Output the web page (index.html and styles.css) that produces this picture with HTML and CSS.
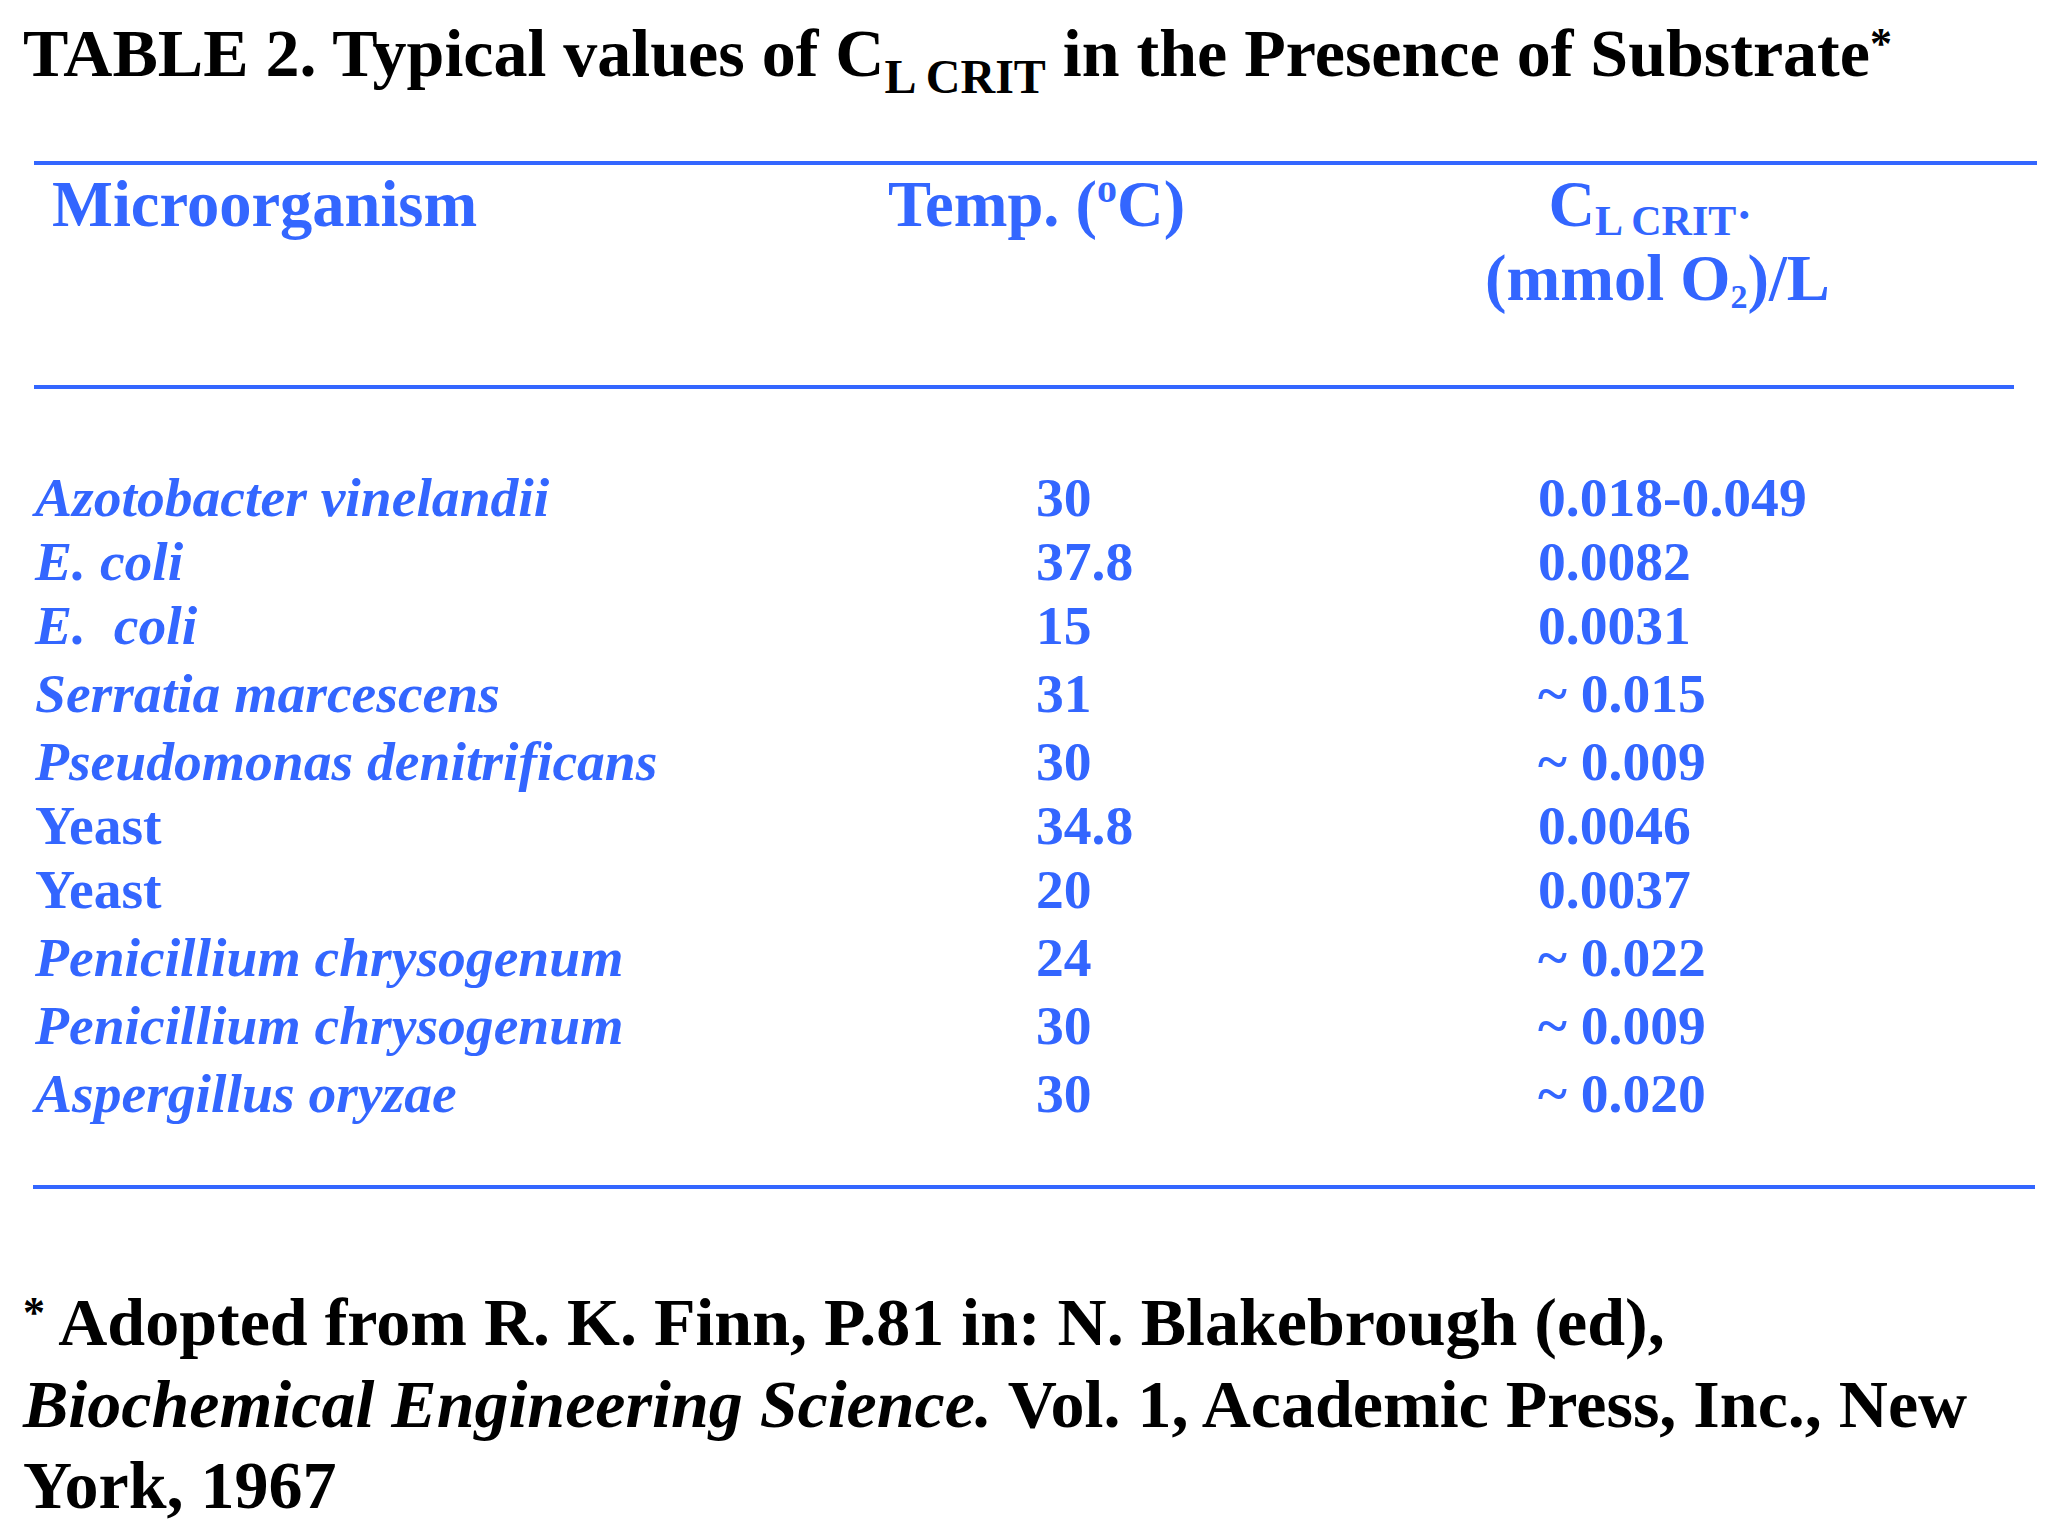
FILE: index.html
```html
<!DOCTYPE html>
<html lang="en">
<head>
<meta charset="utf-8">
<title>Typical values of CL CRIT</title>
<link rel="stylesheet" href="styles.css">
</head>
<body>
<div class="slide">
  <h1 class="title">TABLE 2. Typical values of C<span class="tsub">L CRIT</span> in the Presence of Substrate<span class="star">*</span></h1>

  <div class="table">
    <div class="rule rule-top"></div>
    <div class="head">
      <div class="hcell hcell-org">Microorganism</div>
      <div class="hcell">Temp. (<span class="deg">o</span>C)</div>
      <div class="hcell hcell-c">
        <div class="hline1">C<span class="hsub">L CRIT</span><span class="dot">·</span></div>
        <div>(mmol O<span class="o2">2</span>)/L</div>
      </div>
    </div>
    <div class="rule rule-mid"></div>

    <div class="rows">
      <div class="row"><span class="org">Azotobacter vinelandii</span><span>30</span><span>0.018-0.049</span></div>
      <div class="row"><span class="org">E. coli</span><span>37.8</span><span>0.0082</span></div>
      <div class="row"><span class="org">E.&nbsp; coli</span><span>15</span><span>0.0031</span></div>
      <div class="row row-approx"><span class="org">Serratia marcescens</span><span>31</span><span>~ 0.015</span></div>
      <div class="row row-approx"><span class="org">Pseudomonas denitrificans</span><span>30</span><span>~ 0.009</span></div>
      <div class="row"><span class="org upright">Yeast</span><span>34.8</span><span>0.0046</span></div>
      <div class="row"><span class="org upright">Yeast</span><span>20</span><span>0.0037</span></div>
      <div class="row row-approx"><span class="org">Penicillium chrysogenum</span><span>24</span><span>~ 0.022</span></div>
      <div class="row row-approx"><span class="org">Penicillium chrysogenum</span><span>30</span><span>~ 0.009</span></div>
      <div class="row row-approx"><span class="org">Aspergillus oryzae</span><span>30</span><span>~ 0.020</span></div>
    </div>

    <div class="rule rule-bottom"></div>
  </div>

  <p class="note"><span class="nstar">*</span> Adopted from R. K. Finn, P.81 in: N. Blakebrough (ed),<br><em>Biochemical Engineering Science.</em> Vol. 1, Academic Press, Inc., New<br>York, 1967</p>
</div>
</body>
</html>
```

FILE: styles.css
```css
html, body {
  margin: 0;
  padding: 0;
  background: #ffffff;
}

body {
  font-family: "Liberation Serif", "Times New Roman", Times, serif;
  font-weight: bold;
  color: #000000;
  width: 2048px;
}

.slide {
  width: 2048px;
}

.title {
  margin: 0;
  padding: 13px 0 0 23px;
  font-size: 68px;
  line-height: 80px;
  font-weight: bold;
  white-space: nowrap;
}

.tsub {
  font-size: 48px;
  line-height: 0;
  vertical-align: -17px;
}

.star {
  font-size: 44px;
  line-height: 0;
  vertical-align: 18px;
}

.table {
  margin: 68px 0 0 34px;
  color: #3366ff;
}

.rule {
  height: 4px;
  background: #3366ff;
}

.rule-top { width: 2003px; }
.rule-mid { width: 1980px; margin-top: 69px; }
.rule-bottom { width: 2002px; margin-left: -1px; margin-top: 60px; }

.head {
  display: grid;
  grid-template-columns: 854px 597px auto;
  padding-top: 3px;
  font-size: 64.5px;
  line-height: 74px;
}

.hcell-org {
  padding-left: 18px;
}

.hcell-c {
  text-align: center;
  justify-self: start;
}

.hline1 {
  padding-right: 14px;
}

.deg {
  font-size: 40px;
  line-height: 0;
  vertical-align: 24px;
}

.hsub {
  font-size: 42px;
  line-height: 0;
  vertical-align: -9px;
}

.dot {
  font-size: 48px;
  line-height: 0;
  vertical-align: -5px;
}

.o2 {
  font-size: 34px;
  line-height: 0;
  vertical-align: -8px;
}

.rows {
  margin-top: 76px;
  font-size: 55.6px;
  line-height: 64px;
}

.row {
  display: grid;
  grid-template-columns: 1002px 502px auto;
  white-space: pre;
}

.row-approx {
  padding-top: 4px;
}

.org {
  font-style: italic;
  padding-left: 1px;
}

.org.upright {
  font-style: normal;
}

.note {
  margin: 93px 0 0 0;
  padding-left: 23px;
  font-size: 68px;
  line-height: 81.5px;
}

.note em {
  font-style: italic;
}

.nstar {
  font-size: 44px;
  line-height: 0;
  vertical-align: 18px;
}
```
